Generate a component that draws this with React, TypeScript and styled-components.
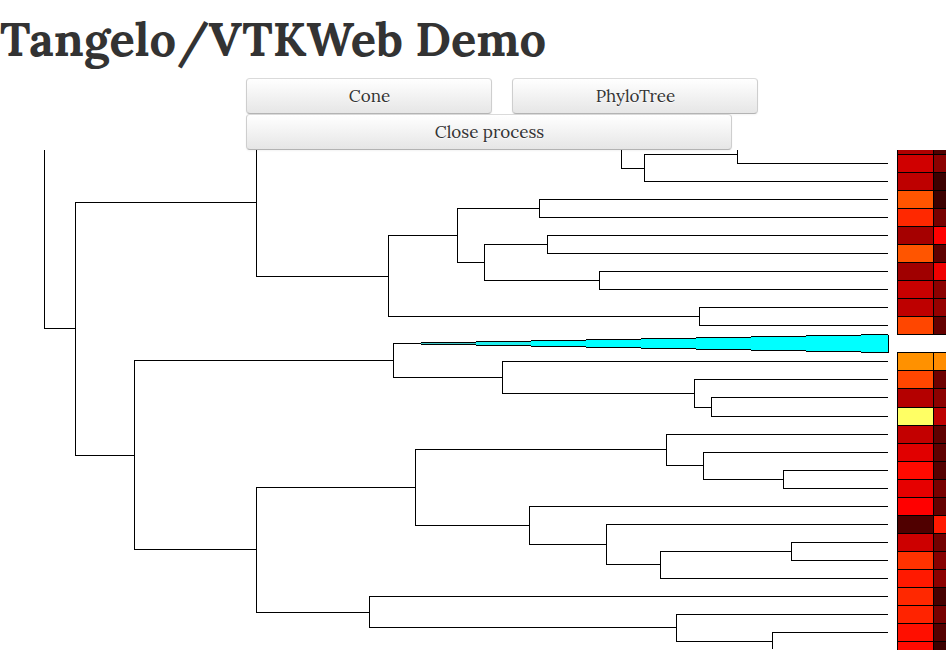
import React from "react";
import styled, { createGlobalStyle } from "styled-components";

const GlobalStyle = createGlobalStyle`
  html, body { margin: 0; padding: 0; background: #fff; overflow: hidden; }
  * { box-sizing: border-box; }
`;

const Page = styled.main`
  display: flex;
  flex-direction: column;
  width: 952px;
  height: 656px;
  overflow: hidden;
  color: #333;
  font-family: Lora, "Liberation Serif", serif;
`;

const Title = styled.h1`
  margin: 0;
  height: 78px;
  padding-top: 9px;
  font-size: 47px;
  line-height: 60px;
  font-weight: 700;
  white-space: nowrap;
`;

const Slash = styled.span`
  margin: 0 -1.2px 0 0.8px;
`;

const Controls = styled.div`
  display: flex;
  flex-direction: column;
  padding-left: 246px;
`;

const ButtonRow = styled.div`
  display: flex;
  gap: 20px;
`;

const Button = styled.button<{ $wide?: boolean }>`
  width: ${(p) => (p.$wide ? 486 : 246)}px;
  height: 36px;
  padding: 0 0 0 1px;
  border: 1px solid;
  border-color: #dadada #cecece #b3b3b3;
  border-radius: 4px;
  background: linear-gradient(#fff, #e6e6e6);
  box-shadow: inset 0 1px 0 rgba(255, 255, 255, 0.2), 0 1px 2px rgba(0, 0, 0, 0.05);
  color: #333;
  font: inherit;
  font-size: 17px;
  line-height: 26px;
  text-shadow: 0 1px 1px rgba(255, 255, 255, 0.75);
`;

const Chart = styled.svg`
  display: block;
  width: 946px;
  height: 500px;
  shape-rendering: crispEdges;
`;

// Each fork: parent x, parent y, node x, upper branch y, lower branch y
const forks: number[][] = [
  [44, 328, 75, 202, 455],
  [75, 202, 256, 100, 276],
  [75, 455, 134, 360, 549],
  [256, 276, 388, 235, 316],
  [388, 235, 457, 208, 262],
  [457, 208, 539, 199, 217],
  [457, 262, 484, 244, 280],
  [484, 244, 547, 235, 253],
  [484, 280, 599, 271, 289],
  [388, 316, 699, 307, 325],
  [134, 360, 393, 343, 377],
  [393, 377, 502, 361, 393],
  [502, 393, 694, 379, 407],
  [694, 407, 711, 397, 416],
  [134, 549, 256, 487, 612],
  [256, 487, 415, 449, 525],
  [415, 449, 666, 434, 465],
  [666, 465, 703, 452, 479],
  [703, 479, 783, 470, 488],
  [415, 525, 529, 506, 544],
  [529, 544, 606, 524, 564],
  [606, 564, 660, 551, 578],
  [660, 551, 791, 542, 560],
  [256, 612, 369, 596, 627],
  [369, 627, 676, 614, 641],
  [621, 168, 644, 154, 181],
  [644, 154, 737, 140, 163],
];

// Leaf branches: start x, y
const leaves: number[][] = [
  [737, 163], [644, 181], [539, 199], [539, 217], [547, 235], [547, 253],
  [599, 271], [599, 289], [699, 307], [699, 325], [502, 361], [694, 379],
  [711, 397], [711, 416], [666, 434], [703, 452], [783, 470], [783, 488],
  [529, 506], [606, 524], [791, 542], [791, 560], [660, 578], [369, 596],
  [676, 614], [772, 632],
];

// Heat map rows: top y, first column, second column
const cells: [number, string, string][] = [
  [136, "#b00000", "#500000"],
  [154, "#d00000", "#8c0000"],
  [172, "#be0000", "#3c0000"],
  [190, "#ff5500", "#3c0000"],
  [208, "#ff2800", "#780000"],
  [226, "#a50000", "#ff0000"],
  [244, "#ff5500", "#5f0000"],
  [262, "#a00000", "#f00000"],
  [280, "#c80000", "#8c0000"],
  [298, "#be0000", "#960000"],
  [316, "#ff4600", "#640000"],
  [352, "#ff9100", "#ff8c00"],
  [370, "#ff4600", "#6e0000"],
  [388, "#b40000", "#8c0000"],
  [407, "#ffff64", "#be0000"],
  [425, "#c30000", "#5f0000"],
  [443, "#e10000", "#5f0000"],
  [461, "#ff0a00", "#550000"],
  [479, "#e60000", "#780000"],
  [497, "#ff0000", "#640000"],
  [515, "#500000", "#ff1900"],
  [533, "#cd0000", "#730000"],
  [551, "#ff3200", "#870000"],
  [569, "#ff1900", "#8c0000"],
  [587, "#ff2800", "#460000"],
  [605, "#ff2300", "#780000"],
  [623, "#ff0f00", "#550000"],
  [641, "#ff0a00", "#3c0000"],
];

const treePath =
  "M44.5 100V328.5M621.5 150V168.5M772.5 649V632.5M676 641.5H772.5M393 343.5H421" +
  forks
    .map(([px, py, x, a, b]) => `M${px} ${py + 0.5}H${x + 0.5}M${x + 0.5} ${a}V${b + 1}`)
    .join("") +
  leaves.map(([x, y]) => `M${x} ${y + 0.5}H888`).join("");

const wedgeSteps = Array.from({ length: 9 }, (_, i) => ({
  x: 421 + i * 55,
  w: i === 8 ? 27 : 55,
  half: i + 1,
}));

const wedgeFill = (half: number) =>
  half === 1 ? "#40c8c8" : half === 2 ? "#20eeee" : "#0ff";

export default function App() {
  return (
    <>
      <GlobalStyle />
      <Page>
        <Title>
          Tangelo<Slash>/</Slash>VTKWeb Demo
        </Title>
        <Controls>
          <ButtonRow>
            <Button>Cone</Button>
            <Button>PhyloTree</Button>
          </ButtonRow>
          <ButtonRow>
            <Button $wide>Close process</Button>
          </ButtonRow>
        </Controls>
        <Chart viewBox="0 150 946 500">
          <path d={treePath} stroke="#000" fill="none" />
          {wedgeSteps.map(({ x, w, half }) => (
            <g key={x}>
              <rect x={x} y={343 - half} width={w} height={half * 2 + 1} fill="#000" />
              <rect x={x} y={344 - half} width={w} height={half * 2 - 1} fill={wedgeFill(half)} />
            </g>
          ))}
          <rect x="888" y="335" width="1" height="18" />
          {cells.map(([y, a, b], i) => {
            const h = cells[i + 1]?.[0] - y === 19 ? 19 : 18;
            return (
              <g key={y}>
                <rect x="897" y={y} width="49" height={h + 1} fill="#000" />
                <rect x="898" y={y + 1} width="35" height={h - 1} fill={a} />
                <rect x="934" y={y + 1} width="12" height={h - 1} fill={b} />
              </g>
            );
          })}
        </Chart>
      </Page>
    </>
  );
}
